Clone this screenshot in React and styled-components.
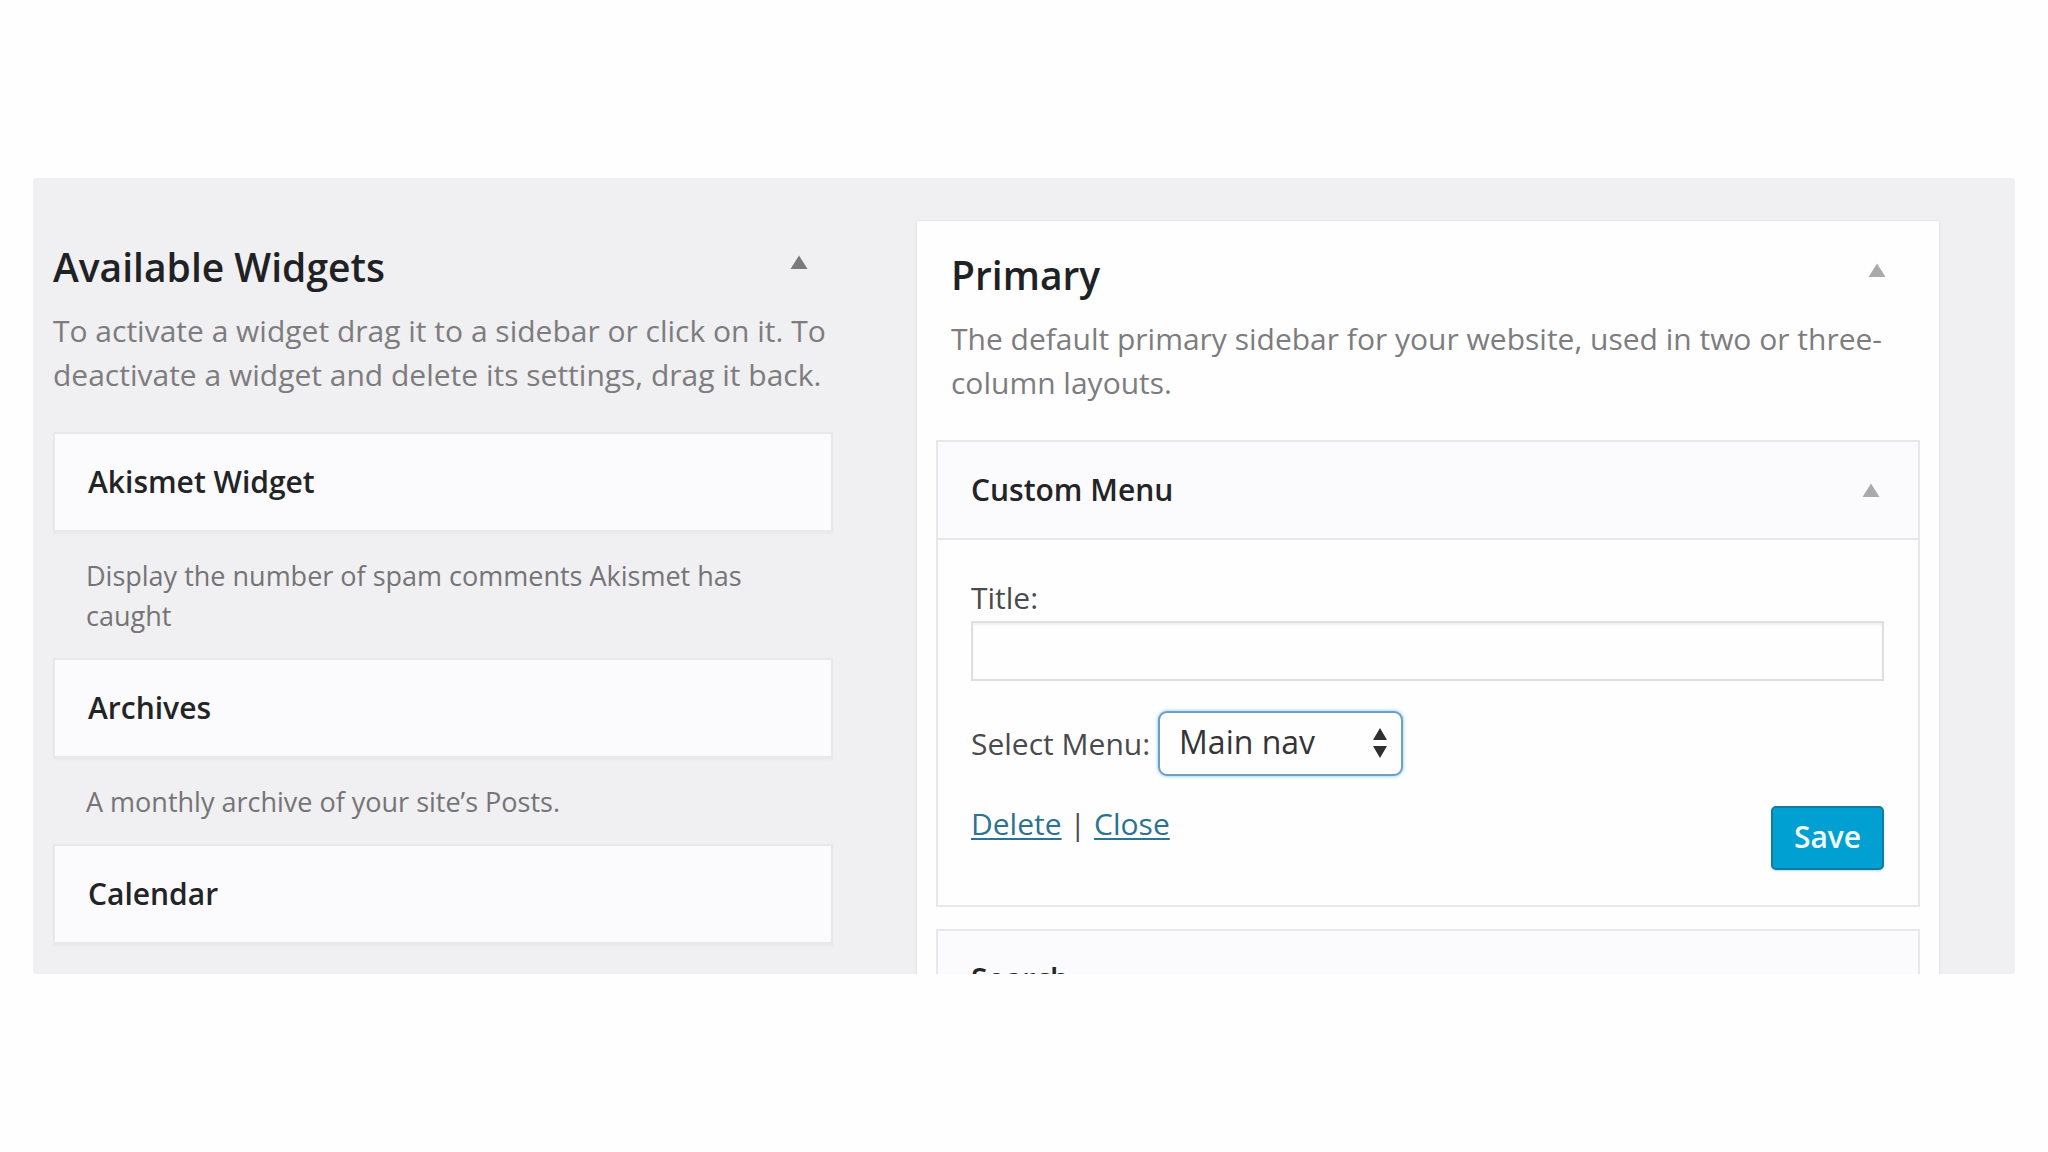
import React from "react";
import styled, { createGlobalStyle } from "styled-components";

const GlobalStyle = createGlobalStyle`
  *, *::before, *::after { box-sizing: border-box; }
  body {
    margin: 0;
    background: #fefefe;
    color: #4a4a4c;
    font-family: "Open Sans", "Noto Sans", sans-serif;
    font-size: 30px;
    line-height: 40px;
  }
`;

const Page = styled.div`
  display: flex;
  flex-direction: column;
  height: 100vh;
  padding: 178px 33px;
`;

const Screen = styled.main`
  flex: 1;
  min-height: 0;
  overflow: hidden;
  display: grid;
  grid-template-columns: 780fr 1022fr;
  column-gap: 84px;
  align-items: start;
  padding: 0 76px 0 20px;
  border-radius: 3px;
  background: #f0eff1;
`;

const Available = styled.section`
  padding-top: 62px;
`;

const Sidebar = styled.section`
  margin-top: 43px;
  padding: 27px 19px 36px;
  background: #fefefe;
  box-shadow: 0 0 0 1px #e8e7e9, 0 1px 3px 1px #e6e5e7;
`;

const SectionHead = styled.header`
  display: flex;
  align-items: flex-start;
  justify-content: space-between;
  padding: 0 ${(p) => p.$right}px 0 ${(p) => p.$left}px;
`;

const Heading = styled.h2`
  margin: 0;
  color: #1f2224;
  font-size: 39px;
  font-weight: 600;
  line-height: 54px;
`;

const Intro = styled.p`
  margin: 15px 0 35px;
  padding-left: ${(p) => p.$left || 0}px;
  color: #7d7c7e;
  font-size: 30px;
  line-height: 44px;
`;

const Toggle = styled.button`
  display: flex;
  margin: 0;
  padding: 15px 0;
  border: 0;
  background: none;
  color: ${(p) => p.$tone};
  cursor: pointer;
`;

const WidgetCard = styled.article`
  border: 2px solid #e8e7ea;
  background: #fbfafc;
  box-shadow: 0 2px 2px #e9e8eb;
`;

const WidgetBar = styled.div`
  display: flex;
  align-items: center;
  justify-content: space-between;
  height: 96px;
  padding: 0 38px 0 33px;
`;

const WidgetTitle = styled.h3`
  margin: 0;
  color: #222426;
  font-size: 30px;
  font-weight: 600;
  line-height: 40px;
`;

const WidgetNote = styled.p`
  margin: 24px 33px 22px;
  color: #757477;
  font-size: 27px;
  line-height: 40px;
`;

const PlacedWidget = styled(WidgetCard)`
  margin-bottom: 22px;
  box-shadow: none;
`;

const WidgetForm = styled.form`
  display: flex;
  flex-direction: column;
  gap: 30px;
  padding: 38px 34px 35px 33px;
  border-top: 2px solid #e8e7ea;
  background: #fefefe;
`;

const TitleField = styled.div`
  display: flex;
  flex-direction: column;
  gap: 3px;
`;

const MenuField = styled.div`
  display: flex;
  align-items: center;
  gap: 8px;
`;

const Label = styled.label`
  color: #4a4a4c;
  font-size: 30px;
  line-height: 40px;
`;

const TextInput = styled.input`
  width: 100%;
  height: 60px;
  padding: 0 12px;
  border: 2px solid #dfdee1;
  border-radius: 0;
  outline: 0;
  background: #fefefe;
  box-shadow: inset 0 2px 2px #f1f0f2;
  color: #333335;
  font: inherit;
`;

const SelectWrap = styled.div`
  position: relative;
  color: #2f2f31;
`;

const MenuSelect = styled.select`
  appearance: none;
  display: block;
  width: 245px;
  height: 65px;
  padding: 0 48px 4px 19px;
  border: 2px solid #6f9fc0;
  border-radius: 9px;
  outline: 0;
  background: #fefefe;
  box-shadow: 0 0 3px 1px #a9dcf3;
  color: #343436;
  font-family: inherit;
  font-size: 32px;
  line-height: 44px;
`;

const SelectArrows = styled.svg`
  position: absolute;
  top: 17px;
  right: 16px;
  pointer-events: none;
`;

const FormActions = styled.div`
  display: flex;
  align-items: flex-start;
  justify-content: space-between;
`;

const Links = styled.div`
  display: flex;
  gap: 8px;
  line-height: 36px;
`;

const ActionLink = styled.a`
  color: #2a7391;
  text-decoration: underline;
  text-decoration-thickness: 2px;
  text-underline-offset: 3px;
`;

const SaveButton = styled.button`
  width: 113px;
  height: 64px;
  padding: 0 0 2px;
  border: 2px solid #157a9d;
  border-radius: 5px;
  background: #01a0d2;
  box-shadow: 0 1px 2px #b5dcea;
  color: #f2fcff;
  font-family: inherit;
  font-size: 30px;
  font-weight: 600;
  line-height: 40px;
  cursor: pointer;
`;

function Collapse({ label, tone }) {
  return (
    <Toggle type="button" aria-label={label} $tone={tone}>
      <svg width="18" height="14" viewBox="0 0 18 14" fill="currentColor" aria-hidden="true">
        <path d="M9 0.5 17.5 14H0.5Z" />
      </svg>
    </Toggle>
  );
}

function AvailableWidget({ title, note }) {
  return (
    <>
      <WidgetCard>
        <WidgetBar>
          <WidgetTitle>{title}</WidgetTitle>
        </WidgetBar>
      </WidgetCard>
      {note && <WidgetNote>{note}</WidgetNote>}
    </>
  );
}

const WIDGETS = [
  { title: "Akismet Widget", note: "Display the number of spam comments Akismet has caught" },
  { title: "Archives", note: "A monthly archive of your site’s Posts." },
  { title: "Calendar" },
];

export default function App() {
  return (
    <>
      <GlobalStyle />
      <Page>
        <Screen>
          <Available>
            <SectionHead $left={0} $right={25}>
              <Heading>Available Widgets</Heading>
              <Collapse label="Collapse available widgets" tone="#7a7a7b" />
            </SectionHead>
            <Intro>
              To activate a widget drag it to a sidebar or click on it. To deactivate a widget
              and delete its settings, drag it back.
            </Intro>
            {WIDGETS.map((w) => (
              <AvailableWidget key={w.title} {...w} />
            ))}
          </Available>

          <Sidebar>
            <SectionHead $left={15} $right={34}>
              <Heading>Primary</Heading>
              <Collapse label="Collapse primary sidebar" tone="#aaaaab" />
            </SectionHead>
            <Intro $left={15}>
              The default primary sidebar for your website, used in two or three-column layouts.
            </Intro>

            <PlacedWidget>
              <WidgetBar>
                <WidgetTitle>Custom Menu</WidgetTitle>
                <Collapse label="Collapse custom menu" tone="#aaaaab" />
              </WidgetBar>
              <WidgetForm onSubmit={(e) => e.preventDefault()}>
                <TitleField>
                  <Label htmlFor="menu-title">Title:</Label>
                  <TextInput id="menu-title" type="text" />
                </TitleField>
                <MenuField>
                  <Label htmlFor="menu-select">Select Menu:</Label>
                  <SelectWrap>
                    <MenuSelect id="menu-select" defaultValue="main">
                      <option value="main">Main nav</option>
                    </MenuSelect>
                    <SelectArrows width="14" height="30" viewBox="0 0 14 30" fill="currentColor" aria-hidden="true">
                      <path d="M7 0 14 12H0ZM0 18H14L7 30Z" />
                    </SelectArrows>
                  </SelectWrap>
                </MenuField>
                <FormActions>
                  <Links>
                    <ActionLink href="#delete">Delete</ActionLink>
                    <span>|</span>
                    <ActionLink href="#close">Close</ActionLink>
                  </Links>
                  <SaveButton type="submit">Save</SaveButton>
                </FormActions>
              </WidgetForm>
            </PlacedWidget>

            <PlacedWidget>
              <WidgetBar>
                <WidgetTitle>Search</WidgetTitle>
              </WidgetBar>
            </PlacedWidget>
          </Sidebar>
        </Screen>
      </Page>
    </>
  );
}
